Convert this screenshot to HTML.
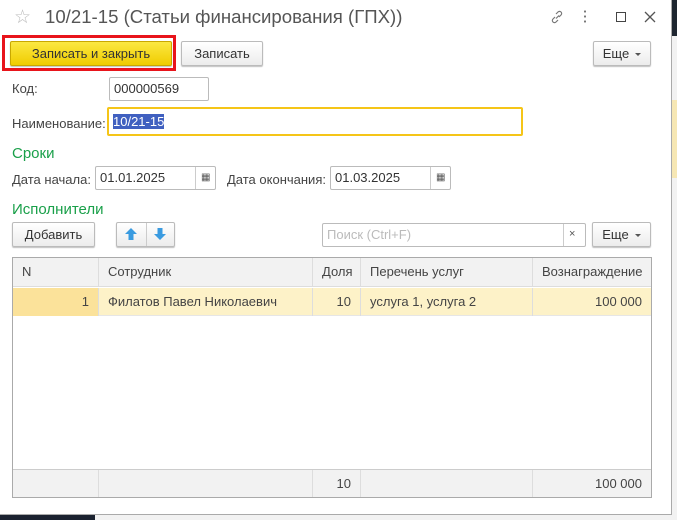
<!DOCTYPE html>
<html><head><meta charset="utf-8"><style>
*{box-sizing:border-box;margin:0;padding:0}
body{width:677px;height:520px;overflow:hidden;background:#f2f2f2;font-family:"Liberation Sans",Arial,sans-serif;font-size:13px;color:#444;position:relative}
.a{position:absolute}
.win{position:absolute;left:0;top:0;width:672px;height:515px;background:#fff;border-right:1px solid #aaa;border-bottom:1px solid #aaa}
.btn{position:absolute;border:1px solid #bbb;border-radius:2px;background:linear-gradient(#fff,#ececec);box-shadow:0 1px 1px rgba(0,0,0,.25);text-align:center;line-height:23px;color:#333;font-size:13px}
.inp{position:absolute;border:1px solid #bbb;border-radius:2px;background:#fff;padding-left:4px;line-height:22px;color:#333;font-size:13px}
.lbl{position:absolute;color:#444;font-size:13px}
.grn{position:absolute;color:#1aa04a;font-size:15px}
.cell{position:absolute;border-right:1px solid #ddd;padding:0 9px;line-height:28px;font-size:13px;color:#444;white-space:nowrap}
.r{text-align:right}
.dd{display:inline-block;width:0;height:0;border-left:3px solid transparent;border-right:3px solid transparent;border-top:3px solid #555;vertical-align:middle;margin-left:6px}
</style></head><body>
<div class="a" style="left:0;top:0;width:677px;height:36px;background:#1e2630"></div>
<div class="a" style="left:672px;top:100px;width:5px;height:78px;background:#f6e7b4"></div>
<div class="a" style="left:0;top:515px;width:95px;height:5px;background:#1b2230"></div>
<div class="win">
<div class="a" style="left:14px;top:6px;font-size:19px;color:#bbb">☆</div>
<div class="a" style="left:45px;top:6px;font-size:18.6px;color:#555">10/21-15 (Статьи финансирования (ГПХ))</div>
<svg class="a" style="left:549px;top:9px" width="16" height="16" viewBox="0 0 16 16"><g fill="none" stroke="#777" stroke-width="1.2"><path d="M7 9.5l3-3M6 8l-2 2a2 2 0 003 3l2-2M10 8l2-2a2 2 0 00-3-3L7 5"/></g></svg>
<div class="a" style="left:584px;top:9px;width:2px;height:14px;background:radial-gradient(circle,#777 1px,transparent 1.2px) 0 0/2px 5px"></div>
<div class="a" style="left:616px;top:12px;width:10px;height:10px;border:1.5px solid #444"></div>
<svg class="a" style="left:643px;top:10px" width="14" height="14"><path d="M2 2L12 12M12 2L2 12" stroke="#555" stroke-width="1.3"/></svg>

<div class="a" style="left:2px;top:35px;width:174px;height:36px;border:3px solid #e8141b"></div>
<div class="btn" style="left:10px;top:41px;width:162px;height:25px;background:linear-gradient(#fbe842,#f0cc00);border-color:#c9a800;color:#333">Записать и закрыть</div>
<div class="btn" style="left:181px;top:41px;width:82px;height:25px">Записать</div>
<div class="btn" style="left:593px;top:41px;width:58px;height:25px">Еще<span class="dd"></span></div>

<div class="lbl" style="left:12px;top:81px">Код:</div>
<div class="inp" style="left:109px;top:77px;width:100px;height:24px">000000569</div>
<div class="lbl" style="left:12px;top:116px">Наименование:</div>
<div class="inp" style="left:107px;top:107px;width:416px;height:29px;border:2px solid #f5c518;padding-left:4px;line-height:25px"><span style="background:#4060c0;color:#fff">10/21-15</span></div>

<div class="grn" style="left:12px;top:145px">Сроки</div>
<div class="lbl" style="left:12px;top:172px">Дата начала:</div>
<div class="inp" style="left:95px;top:166px;width:121px;height:24px">01.01.2025</div>
<div class="a" style="left:195px;top:167px;width:1px;height:22px;background:#ccc"></div>
<div class="a" style="left:201px;top:172px;font-size:10px;color:#555">▦</div>
<div class="lbl" style="left:227px;top:172px">Дата окончания:</div>
<div class="inp" style="left:330px;top:166px;width:121px;height:24px">01.03.2025</div>
<div class="a" style="left:430px;top:167px;width:1px;height:22px;background:#ccc"></div>
<div class="a" style="left:436px;top:172px;font-size:10px;color:#555">▦</div>

<div class="grn" style="left:12px;top:201px">Исполнители</div>
<div class="btn" style="left:12px;top:222px;width:83px;height:25px">Добавить</div>
<div class="btn" style="left:116px;top:222px;width:59px;height:25px"></div>
<div class="a" style="left:146px;top:223px;width:1px;height:23px;background:#ccc"></div>
<svg class="a" style="left:124px;top:227px" width="14" height="14"><path d="M7 1L1 7h3.5v6h5V7H13z" fill="#3a9be0"/></svg>
<svg class="a" style="left:153px;top:227px" width="14" height="14"><path d="M7 13L1 7h3.5V1h5v6H13z" fill="#3a9be0"/></svg>
<div class="inp" style="left:322px;top:223px;width:264px;height:24px;color:#bbb">Поиск (Ctrl+F)</div>
<div class="a" style="left:563px;top:224px;width:1px;height:22px;background:#ccc"></div>
<div class="a" style="left:569px;top:228px;font-size:11px;color:#555">×</div>
<div class="btn" style="left:592px;top:222px;width:59px;height:25px">Еще<span class="dd"></span></div>

<div class="a" style="left:12px;top:257px;width:640px;height:241px;border:1px solid #aaa;background:#fff"></div>
<div class="a" style="left:13px;top:258px;width:638px;height:29px;background:#f2f2f2;border-bottom:1px solid #ddd"></div>
<div class="a" style="left:13px;top:288px;width:638px;height:28px;background:#fdf2c8;border-bottom:1px solid #e6e6e6"></div>
<div class="a" style="left:13px;top:288px;width:86px;height:28px;background:#fbe29a"></div>
<div class="a" style="left:13px;top:469px;width:638px;height:28px;background:#f2f2f2;border-top:1px solid #ccc"></div>

<div class="cell" style="left:13px;top:258px;width:86px">N</div>
<div class="cell" style="left:99px;top:258px;width:214px">Сотрудник</div>
<div class="cell" style="left:313px;top:258px;width:48px">Доля</div>
<div class="cell" style="left:361px;top:258px;width:172px">Перечень услуг</div>
<div class="cell" style="left:533px;top:258px;width:118px;border:none">Вознаграждение</div>

<div class="cell r" style="left:13px;top:288px;width:86px">1</div>
<div class="cell" style="left:99px;top:288px;width:214px">Филатов Павел Николаевич</div>
<div class="cell r" style="left:313px;top:288px;width:48px">10</div>
<div class="cell" style="left:361px;top:288px;width:172px">услуга 1, услуга 2</div>
<div class="cell r" style="left:533px;top:288px;width:118px;border:none">100 000</div>

<div class="cell" style="left:13px;top:470px;width:86px;height:27px"></div>
<div class="cell" style="left:99px;top:470px;width:214px;height:27px"></div>
<div class="cell r" style="left:313px;top:470px;width:48px;height:27px;line-height:27px">10</div>
<div class="cell" style="left:361px;top:470px;width:172px;height:27px"></div>
<div class="cell r" style="left:533px;top:470px;width:118px;border:none;line-height:27px">100 000</div>
</div>
</body></html>
